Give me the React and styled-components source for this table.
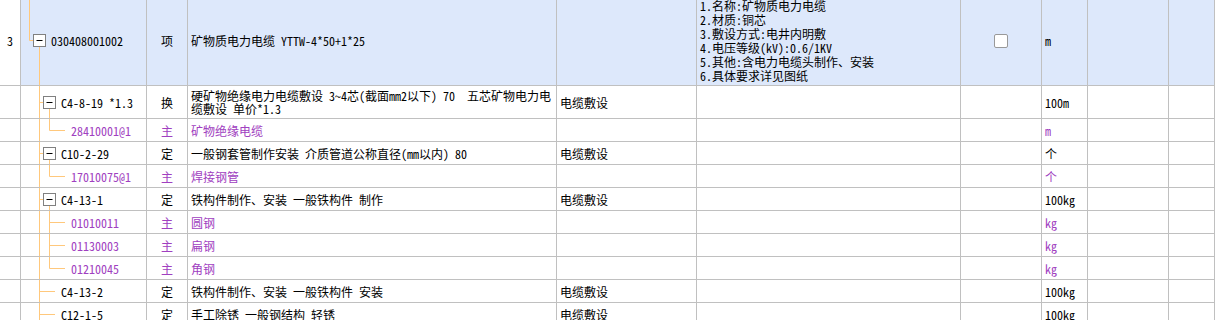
import React from 'react';
import styled, { createGlobalStyle } from 'styled-components';

const GlobalStyle = createGlobalStyle`
    body {
        margin: 0;
        background: #fff;
        font-family: "Noto Sans Mono CJK SC", "Noto Sans CJK SC", "Liberation Mono", monospace;
        font-size: 12px;
        color: #000;
        overflow: hidden;
    }
`;

const LINE = '#c0c0c0';
const TREE = '#ffc87c';
const PURPLE = '#a040c0';
const TINT = '#dde8fb';

const Sheet = styled.div`
    margin-top: -4px;
    width: 1215px;
`;

const Row = styled.div`
    display: grid;
    grid-template-columns: 21px 126px 41px 369px 140px 264px 81px 46px 81px 1fr;
    height: ${p => p.$h}px;
    background: ${p => (p.$tint ? TINT : '#fff')};
    color: ${p => (p.$main ? PURPLE : '#000')};
`;

const Cell = styled.div`
    display: flex;
    align-items: center;
    justify-content: ${p => (p.$center ? 'center' : 'flex-start')};
    padding-left: ${p => (p.$center ? 0 : 3)}px;
    border-right: 1px solid ${LINE};
    border-bottom: 1px solid ${LINE};
    white-space: pre;
    line-height: 13px;
    overflow: hidden;
    min-width: 0;
`;

const IndexCell = styled(Cell)`
    background: #fff;
    color: #000;
    padding-left: 0;
`;

const CodeCell = styled.div`
    display: flex;
    align-items: stretch;
    border-right: 1px solid ${LINE};
    border-bottom: 1px solid ${LINE};
    white-space: pre;
    overflow: hidden;
`;

const CodeText = styled.span`
    align-self: center;
`;

const Features = styled.div`
    line-height: 14px;
`;

const CheckBox = styled.span`
    width: 12px;
    height: 12px;
    background: #fff;
    border: 1px solid #999;
    border-radius: 2px;
`;

// tree guide lines drawn in the code column
const TreeGuide = ({ kind, last, h }) => {
    const c = Math.floor(h / 2) + 0.5;
    const widths = { root: 30, branch: 40, leaf2: 40, leaf3: 50 };
    const w = widths[kind];
    const box = (x) => (
        <g>
            <rect x={x + 0.5} y={c - 6} width="12" height="12" fill="#fff" stroke="#808080" />
            <line x1={x + 3.5} x2={x + 9.5} y1={c} y2={c} stroke="#000" />
        </g>
    );
    return (
        <svg width={w} height={h} style={{ flex: 'none' }}>
            {kind === 'root' && (
                <g stroke={TREE}>
                    <line x1="8.5" x2="8.5" y1="0" y2={c} />
                    <line x1="8.5" x2="12" y1={c} y2={c} />
                    <line x1="18.5" x2="18.5" y1={c + 6} y2={h} />
                </g>
            )}
            {kind === 'root' && box(12)}
            {kind !== 'root' && (
                <line x1="18.5" x2="18.5" y1="0" y2={h} stroke={TREE} />
            )}
            {kind === 'branch' && (
                <g stroke={TREE}>
                    <line x1="18.5" x2="22" y1={c} y2={c} />
                    <line x1="28.5" x2="28.5" y1={c + 6} y2={h} />
                </g>
            )}
            {kind === 'branch' && box(22)}
            {kind === 'leaf2' && (
                <line x1="18.5" x2="34" y1={c} y2={c} stroke={TREE} />
            )}
            {kind === 'leaf3' && (
                <g stroke={TREE}>
                    <line x1="28.5" x2="28.5" y1="0" y2={last ? c : h} />
                    <line x1="28.5" x2="44" y1={c} y2={c} />
                </g>
            )}
        </svg>
    );
};

const features = [
    '1.名称:矿物质电力电缆',
    '2.材质:铜芯',
    '3.敷设方式:电井内明敷',
    '4.电压等级(kV):0.6/1KV',
    '5.其他:含电力电缆头制作、安装',
    '6.具体要求详见图纸',
];

const rows = [
    { no: '3', kind: 'root', code: '030408001002', type: '项', name: '矿物质电力电缆 YTTW-4*50+1*25', unit: 'm', tint: true, h: 90, features: true, check: true },
    { kind: 'branch', code: 'C4-8-19 *1.3', type: '换', name: '硬矿物绝缘电力电缆敷设 3~4芯(截面mm2以下) 70  五芯矿物电力电\n缆敷设 单价*1.3', spec: '电缆敷设', unit: '100m', h: 33 },
    { kind: 'leaf3', last: true, code: '28410001@1', type: '主', name: '矿物绝缘电缆', unit: 'm', main: true },
    { kind: 'branch', code: 'C10-2-29', type: '定', name: '一般钢套管制作安装 介质管道公称直径(mm以内) 80', spec: '电缆敷设', unit: '个' },
    { kind: 'leaf3', last: true, code: '17010075@1', type: '主', name: '焊接钢管', unit: '个', main: true },
    { kind: 'branch', code: 'C4-13-1', type: '定', name: '铁构件制作、安装 一般铁构件 制作', spec: '电缆敷设', unit: '100kg' },
    { kind: 'leaf3', code: '01010011', type: '主', name: '圆钢', unit: 'kg', main: true },
    { kind: 'leaf3', code: '01130003', type: '主', name: '扁钢', unit: 'kg', main: true },
    { kind: 'leaf3', last: true, code: '01210045', type: '主', name: '角钢', unit: 'kg', main: true },
    { kind: 'leaf2', code: 'C4-13-2', type: '定', name: '铁构件制作、安装 一般铁构件 安装', spec: '电缆敷设', unit: '100kg' },
    { kind: 'leaf2', code: 'C12-1-5', type: '定', name: '手工除锈 一般钢结构 轻锈', spec: '电缆敷设', unit: '100kg' },
];

const App = () => {
    return (
        <>
            <GlobalStyle />
            <Sheet>
                {rows.map((r, i) => {
                    const h = r.h || 23;
                    return (
                        <Row key={i} $h={h} $tint={r.tint} $main={r.main}>
                            <IndexCell $center>{r.no}</IndexCell>
                            <CodeCell>
                                <TreeGuide kind={r.kind} last={r.last} h={h - 1} />
                                <CodeText>{r.code}</CodeText>
                            </CodeCell>
                            <Cell $center>{r.type}</Cell>
                            <Cell>{r.name}</Cell>
                            <Cell>{r.spec}</Cell>
                            <Cell>
                                {r.features && (
                                    <Features>
                                        {features.map(f => <div key={f}>{f}</div>)}
                                    </Features>
                                )}
                            </Cell>
                            <Cell $center>{r.check && <CheckBox />}</Cell>
                            <Cell>{r.unit}</Cell>
                            <Cell />
                            <Cell />
                        </Row>
                    );
                })}
            </Sheet>
        </>
    );
};

export default App;
